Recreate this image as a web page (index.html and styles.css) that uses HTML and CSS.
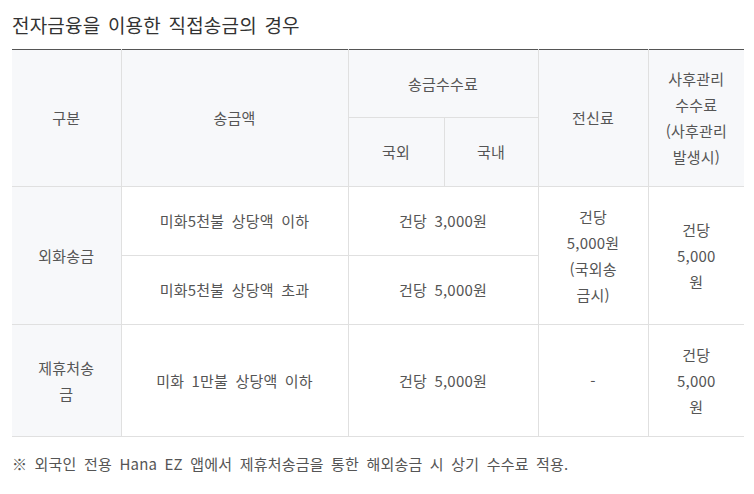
FILE: index.html
```html
<!DOCTYPE html>
<html lang="ko">
<head>
<meta charset="utf-8">
<link rel="stylesheet" href="styles.css">
</head>
<body>
<div class="page">
  <h2 class="title">전자금융을 이용한 직접송금의 경우</h2>
  <table class="fee">
    <colgroup>
      <col class="c1"><col class="c2"><col class="c3"><col class="c4"><col class="c5"><col class="c6">
    </colgroup>
    <thead>
      <tr class="h1">
        <th rowspan="2">구분</th>
        <th rowspan="2">송금액</th>
        <th colspan="2">송금수수료</th>
        <th rowspan="2">전신료</th>
        <th rowspan="2">사후관리<br>수수료<br>(사후관리<br>발생시)</th>
      </tr>
      <tr class="h2">
        <th>국외</th>
        <th>국내</th>
      </tr>
    </thead>
    <tbody>
      <tr class="r1">
        <th rowspan="2" class="side">외화송금</th>
        <td>미화5천불 상당액 이하</td>
        <td colspan="2">건당 3,000원</td>
        <td rowspan="2" class="narrow">건당<br>5,000원<br>(국외송<br>금시)</td>
        <td rowspan="2" class="narrow">건당<br>5,000<br>원</td>
      </tr>
      <tr class="r2">
        <td>미화5천불 상당액 초과</td>
        <td colspan="2">건당 5,000원</td>
      </tr>
      <tr class="r3">
        <th class="side">제휴처송<br>금</th>
        <td>미화 1만불 상당액 이하</td>
        <td colspan="2">건당 5,000원</td>
        <td>-</td>
        <td class="narrow">건당<br>5,000<br>원</td>
      </tr>
    </tbody>
  </table>
  <p class="note">※ 외국인 전용 Hana EZ 앱에서 제휴처송금을 통한 해외송금 시 상기 수수료 적용.</p>
</div>
</body>
</html>
```

FILE: styles.css
```css
html, body {
  margin: 0;
  padding: 0;
  background: #fff;
}
body {
  font-family: "Noto Sans CJK KR", "Noto Sans", sans-serif;
  color: #555;
}
.page {
  padding: 0 10px 0 12px;
}
.title {
  margin: 0;
  padding-top: 13px;
  height: 36px;
  font-size: 19px;
  font-weight: 400;
  line-height: 24px;
  color: #333;
  letter-spacing: 0.2px;
  word-spacing: 2px;
}
.fee {
  width: 732px;
  border-collapse: collapse;
  table-layout: fixed;
  border-top: 1px solid #555;
  font-size: 15px;
  line-height: 26px;
  letter-spacing: 0.2px;
  word-spacing: 3px;
}
.c1 { width: 109px; }
.c2 { width: 227px; }
.c3 { width: 96px; }
.c4 { width: 94px; }
.c5 { width: 110px; }
.c6 { width: 96px; }
.fee th, .fee td {
  border: 1px solid #e0e0e0;
  padding: 0;
  text-align: center;
  vertical-align: middle;
  font-weight: 400;
  color: #555;
}
.fee tr > :first-child { border-left: none; }
.fee tr > :last-child { border-right: none; }
.fee thead th { background: #f7f8fa; }
.fee thead tr.h1 th { border-top: none; }
.fee .side { background: #f7f8fa; }
.fee tr.h2 th:last-child { border-right: 1px solid #e0e0e0; }
.fee tbody tr.r2 td:last-child { border-right: 1px solid #e0e0e0; }
.h1 { height: 68px; }
.h2 { height: 69px; }
.r1 { height: 69px; }
.r2 { height: 69px; }
.r3 { height: 112px; }
.note {
  margin: 17px 0 0;
  font-size: 15px;
  line-height: 20px;
  color: #555;
  letter-spacing: 0.2px;
  word-spacing: 3px;
}
```
